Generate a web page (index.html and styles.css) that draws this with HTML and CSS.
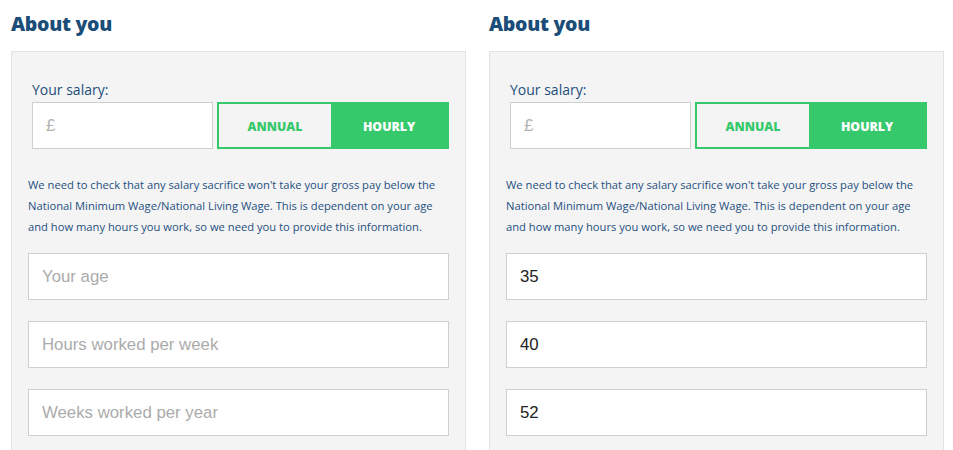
FILE: index.html
```html
<!DOCTYPE html>
<html>
<head>
<meta charset="utf-8">
<link rel="stylesheet" href="styles.css">
</head>
<body>
<div class="page">
  <section class="col">
    <h2 class="title">About you</h2>
    <div class="panel">
      <div class="label">Your salary:</div>
      <div class="salary-row">
        <div class="money">£</div>
        <div class="toggle">
          <div class="opt opt-annual">ANNUAL</div>
          <div class="opt opt-hourly">HOURLY</div>
        </div>
      </div>
      <p class="info">We need to check that any salary sacrifice won't take your gross pay below the National Minimum Wage/National Living Wage. This is dependent on your age and how many hours you work, so we need you to provide this information.</p>
      <div class="field placeholder">Your age</div>
      <div class="field placeholder">Hours worked per week</div>
      <div class="field placeholder">Weeks worked per year</div>
    </div>
  </section>
  <section class="col">
    <h2 class="title">About you</h2>
    <div class="panel">
      <div class="label">Your salary:</div>
      <div class="salary-row">
        <div class="money">£</div>
        <div class="toggle">
          <div class="opt opt-annual">ANNUAL</div>
          <div class="opt opt-hourly">HOURLY</div>
        </div>
      </div>
      <p class="info">We need to check that any salary sacrifice won't take your gross pay below the National Minimum Wage/National Living Wage. This is dependent on your age and how many hours you work, so we need you to provide this information.</p>
      <div class="field">35</div>
      <div class="field">40</div>
      <div class="field">52</div>
    </div>
  </section>
</div>
</body>
</html>
```

FILE: styles.css
```css
html, body {
  margin: 0;
  padding: 0;
  background: #ffffff;
  overflow: hidden;
}
body {
  font-family: "Open Sans", Lato, sans-serif;
}
.page {
  display: flex;
  gap: 23px;
  padding: 0 9px 0 11px;
}
.col {
  width: 455px;
  flex: 0 0 455px;
}
.title {
  margin: 0;
  padding-top: 11px;
  height: 40px;
  box-sizing: border-box;
  font-size: 19.5px;
  line-height: 26px;
  font-weight: 800;
  letter-spacing: -0.3px;
  color: #1b4d78;
}
.panel {
  background: #f4f4f4;
  border: 1px solid #e2e2e2;
  padding: 0 16px;
  height: 420px;
  box-sizing: border-box;
  margin-top: 11px;
}
.label {
  margin: 25px 0 0 4px;
  font-size: 14px;
  line-height: 25px;
  color: #1d4e7b;
}
.salary-row {
  display: flex;
  gap: 4px;
  margin-left: 4px;
  height: 47px;
}
.money {
  width: 181px;
  box-sizing: border-box;
  background: #fff;
  border: 1.5px solid #cfcfcf;
  font-family: "Liberation Sans", Arial, sans-serif;
  font-size: 17px;
  color: #b3b3b3;
  padding-left: 13px;
  display: flex;
  align-items: center;
}
.toggle {
  flex: 1;
  display: flex;
  border: 2px solid #36c96b;
  box-sizing: border-box;
}
.opt {
  display: flex;
  align-items: center;
  justify-content: center;
  font-weight: 800;
  font-size: 12.3px;
  padding-top: 1px;
}
.opt-annual {
  width: 112px;
  color: #36c96b;
  background: #f4f4f4;
}
.opt-hourly {
  flex: 1;
  background: #36c96b;
  color: #ffffff;
}
.info {
  margin: 25px 0 16px 0;
  font-size: 11.2px;
  line-height: 21px;
  color: #1f5081;
}
.field {
  height: 47px;
  box-sizing: border-box;
  background: #fff;
  border: 1.5px solid #cfcfcf;
  margin-bottom: 21px;
  padding-left: 13px;
  display: flex;
  align-items: center;
  font-family: "Liberation Sans", Arial, sans-serif;
  font-size: 16.8px;
  color: #222;
}
.field.placeholder {
  color: #ababab;
}
```
